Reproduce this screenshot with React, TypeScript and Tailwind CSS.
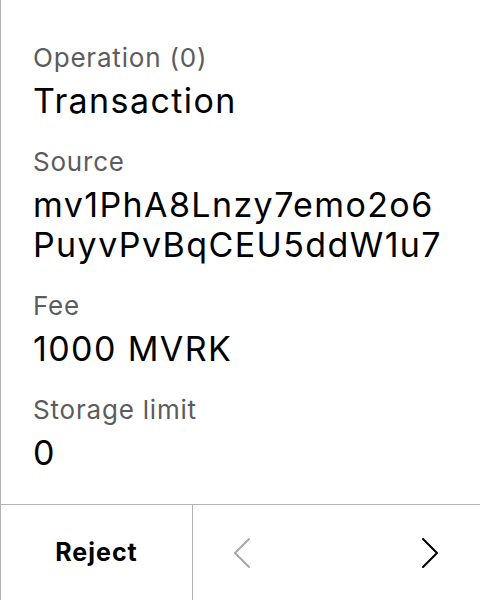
const rows = [
  { label: "Operation (0)", value: "Transaction" },
  { label: "Source", value: "mv1PhA8Lnzy7emo2o6PuyvPvBqCEU5ddW1u7" },
  { label: "Fee", value: "1000 MVRK" },
  { label: "Storage limit", value: "0" },
];

function Chevron({ dir, muted }: { dir: "left" | "right"; muted?: boolean }) {
  const points = dir === "left" ? "15,1 1,15 15,29" : "1,1 15,15 1,29";
  return (
    <svg width="16" height="30" viewBox="0 0 16 30" fill="none">
      <polyline
        points={points}
        stroke={muted ? "#a8a8a8" : "#000"}
        strokeWidth="2"
        strokeLinecap="round"
        strokeLinejoin="round"
      />
    </svg>
  );
}

export default function App() {
  return (
    <div className="flex h-[600px] w-[480px] flex-col border-l border-[#b3b3b3] bg-white font-['Inter',sans-serif] text-black">
      <div className="flex flex-1 flex-col gap-[25px] px-8 pt-[42px]">
        {rows.map((row) => (
          <div key={row.label} className="flex flex-col gap-[7px]">
            <p className="text-[26px] leading-[32px] tracking-[0.8px] text-[#5c5c5c]">{row.label}</p>
            <p className="break-all text-[34px] leading-[40px] tracking-[1.4px]">{row.value}</p>
          </div>
        ))}
      </div>
      <div className="flex h-[96px] border-t border-[#b3b3b3]">
        <button className="w-[192px] border-r border-[#b3b3b3] text-[25px] font-bold tracking-[1px]">
          Reject
        </button>
        <div className="flex flex-1 items-center justify-between pl-[41px] pr-[42px]">
          <Chevron dir="left" muted />
          <Chevron dir="right" />
        </div>
      </div>
    </div>
  );
}
